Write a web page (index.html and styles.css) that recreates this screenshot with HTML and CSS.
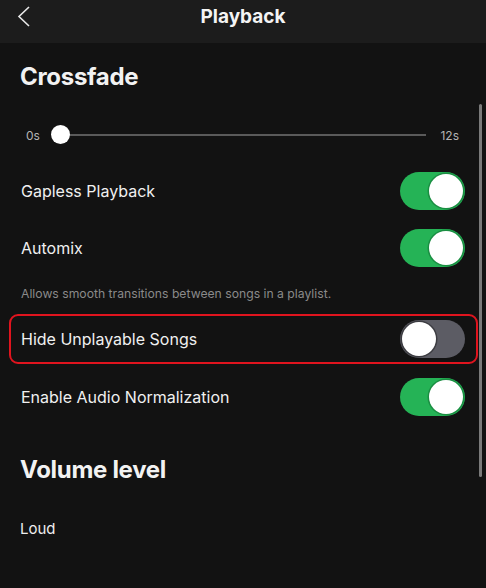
FILE: index.html
```html
<!DOCTYPE html>
<html lang="en">
<head>
    <meta charset="UTF-8">
    <meta name="viewport" content="width=device-width, initial-scale=1.0">
    <title>Playback</title>
    <link rel="stylesheet" href="styles.css">
</head>
<body>
    <div class="header">
        <svg class="back" width="14" height="22" viewBox="0 0 14 22">
            <path d="M12 1 L2 10.5 L12 20" fill="none" stroke="#e8e8e8" stroke-width="1.6"/>
        </svg>
        <h1>Playback</h1>
    </div>

    <div class="content">
        <h2 class="section-title">Crossfade</h2>

        <div class="slider">
            <span class="slider-label">0s</span>
            <div class="track">
                <div class="thumb"></div>
            </div>
            <span class="slider-label">12s</span>
        </div>

        <div class="row">
            <span>Gapless Playback</span>
            <div class="toggle on"><div class="knob"></div></div>
        </div>

        <div class="row">
            <span>Automix</span>
            <div class="toggle on"><div class="knob"></div></div>
        </div>
        <p class="hint">Allows smooth transitions between songs in a playlist.</p>

        <div class="row highlight">
            <span>Hide Unplayable Songs</span>
            <div class="toggle"><div class="knob"></div></div>
        </div>

        <div class="row">
            <span>Enable Audio Normalization</span>
            <div class="toggle on"><div class="knob"></div></div>
        </div>

        <h2 class="section-title volume">Volume level</h2>
        <p class="value">Loud</p>

        <div class="scrollbar"></div>
    </div>
</body>
</html>
```

FILE: styles.css
```css
* {
    margin: 0;
    padding: 0;
    box-sizing: border-box;
}

body {
    font-family: Inter, 'Open Sans', sans-serif;
    background: #121212;
    color: #f2f2f2;
    min-height: 100vh;
}

.header {
    height: 43px;
    background: #1c1c1c;
    display: flex;
    align-items: center;
    justify-content: center;
    position: relative;
}

.header h1 {
    font-size: 19px;
    font-weight: 700;
    color: #f4f4f4;
    margin-top: -10px;
}

.back {
    position: absolute;
    left: 17px;
    top: 6px;
}

.content {
    position: relative;
    padding-top: 19px;
    padding-bottom: 40px;
}

.section-title {
    font-size: 24px;
    font-weight: 700;
    line-height: 30px;
    padding: 0 20px;
    letter-spacing: -0.3px;
}

.section-title.volume {
    margin-top: 30px;
}

.slider {
    display: flex;
    align-items: center;
    height: 20px;
    margin-top: 33px;
    padding: 0 27px 0 26px;
}

.slider-label {
    font-size: 12px;
    color: #b4b4b4;
}

.track {
    flex: 1;
    height: 2px;
    background: #5a5a5a;
    margin: 0 14px 0 21px;
    position: relative;
}

.thumb {
    position: absolute;
    left: -10px;
    top: -9px;
    width: 19px;
    height: 19px;
    border-radius: 50%;
    background: #fff;
}

.row {
    height: 57px;
    display: flex;
    align-items: center;
    justify-content: space-between;
    padding: 0 21px;
    font-size: 16px;
    color: #f0f0f0;
}

.slider + .row {
    margin-top: 17px;
}

.row.highlight {
    height: 50px;
    margin: 12px 8px 4px 9px;
    padding: 0 11px 0 10px;
    border: 2px solid #e0141e;
    border-radius: 9px;
}

.hint {
    font-size: 12.2px;
    color: #8a8a8a;
    padding: 0 21px;
    margin-top: 10px;
    line-height: 16px;
}

.toggle {
    width: 65px;
    height: 38px;
    border-radius: 19px;
    background: #5c5c64;
    position: relative;
    flex-shrink: 0;
}

.toggle.on {
    background: #25b356;
}

.knob {
    position: absolute;
    top: 2px;
    left: 2px;
    width: 34px;
    height: 34px;
    border-radius: 50%;
    background: #fff;
    box-shadow: 0 0 0 1.5px rgba(0,0,0,0.35);
}

.toggle.on .knob {
    left: auto;
    right: 2px;
    box-shadow: 0 0 0 1.5px #1a8e42;
}

.value {
    font-size: 15px;
    padding: 0 20px;
    margin-top: 34px;
    color: #eee;
}

.scrollbar {
    position: absolute;
    right: 4px;
    top: 61px;
    width: 3px;
    height: 373px;
    border-radius: 2px;
    background: #7a7a7a;
}
```
